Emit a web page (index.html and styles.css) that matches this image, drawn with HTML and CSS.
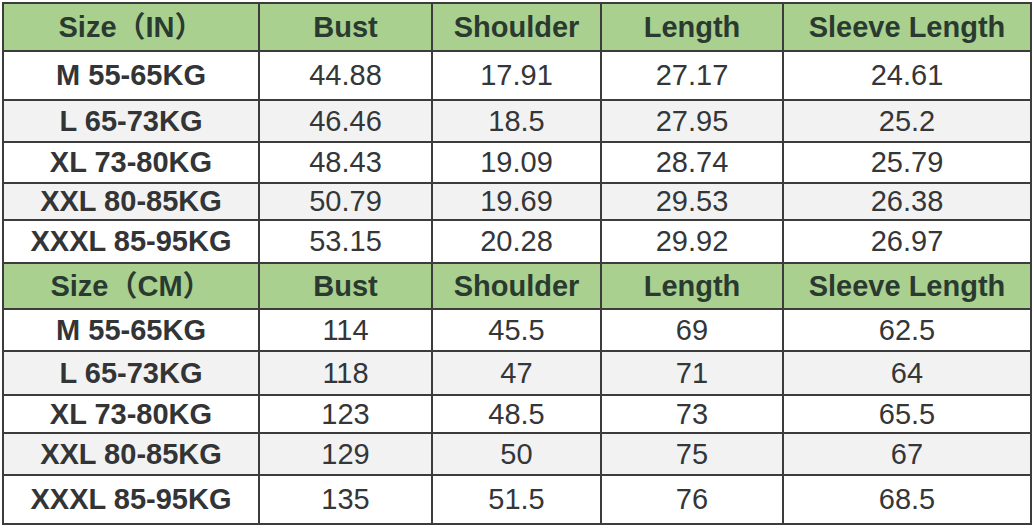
FILE: index.html
```html
<!DOCTYPE html>
<html lang="en">
<head>
<meta charset="utf-8">
<title>Size Chart</title>
<link rel="stylesheet" href="styles.css">
</head>
<body>
<div class="chart">
  <div class="c hd first">Size（IN）</div><div class="c hd">Bust</div><div class="c hd">Shoulder</div><div class="c hd">Length</div><div class="c hd">Sleeve Length</div>
  <div class="c first">M 55-65KG</div><div class="c">44.88</div><div class="c">17.91</div><div class="c">27.17</div><div class="c">24.61</div>
  <div class="c alt first">L 65-73KG</div><div class="c alt">46.46</div><div class="c alt">18.5</div><div class="c alt">27.95</div><div class="c alt">25.2</div>
  <div class="c first">XL 73-80KG</div><div class="c">48.43</div><div class="c">19.09</div><div class="c">28.74</div><div class="c">25.79</div>
  <div class="c alt first">XXL 80-85KG</div><div class="c alt">50.79</div><div class="c alt">19.69</div><div class="c alt">29.53</div><div class="c alt">26.38</div>
  <div class="c first">XXXL 85-95KG</div><div class="c">53.15</div><div class="c">20.28</div><div class="c">29.92</div><div class="c">26.97</div>
  <div class="c hd first">Size（CM）</div><div class="c hd">Bust</div><div class="c hd">Shoulder</div><div class="c hd">Length</div><div class="c hd">Sleeve Length</div>
  <div class="c first">M 55-65KG</div><div class="c">114</div><div class="c">45.5</div><div class="c">69</div><div class="c">62.5</div>
  <div class="c alt first">L 65-73KG</div><div class="c alt">118</div><div class="c alt">47</div><div class="c alt">71</div><div class="c alt">64</div>
  <div class="c first">XL 73-80KG</div><div class="c">123</div><div class="c">48.5</div><div class="c">73</div><div class="c">65.5</div>
  <div class="c alt first">XXL 80-85KG</div><div class="c alt">129</div><div class="c alt">50</div><div class="c alt">75</div><div class="c alt">67</div>
  <div class="c first">XXXL 85-95KG</div><div class="c">135</div><div class="c">51.5</div><div class="c">76</div><div class="c">68.5</div>
</div>
</body>
</html>
```
FILE: styles.css
```css
html, body {
  margin: 0;
  padding: 0;
  background: #ffffff;
}
body {
  padding: 2px 0 0 2px;
  font-family: "Liberation Sans", Arial, "Noto Sans CJK SC", sans-serif;
}
.chart {
  display: grid;
  width: 1030px;
  box-sizing: border-box;
  grid-template-columns: 254px 171px 167px 180px 246px;
  grid-template-rows: 46px 47px 40px 39px 35px 41px 44px 40px 42px 36px 40px 47px;
  gap: 2px;
  padding: 2px;
  background: #3c3c3c;
}
.c {
  display: flex;
  align-items: center;
  justify-content: center;
  background: #ffffff;
  color: #343638;
  font-size: 29px;
  line-height: 1;
  white-space: nowrap;
}
.alt {
  background: #f2f2f2;
}
.first {
  font-weight: bold;
  color: #333436;
}
.hd {
  background: #a9d08e;
  color: #2a3a30;
  font-weight: bold;
}
```
